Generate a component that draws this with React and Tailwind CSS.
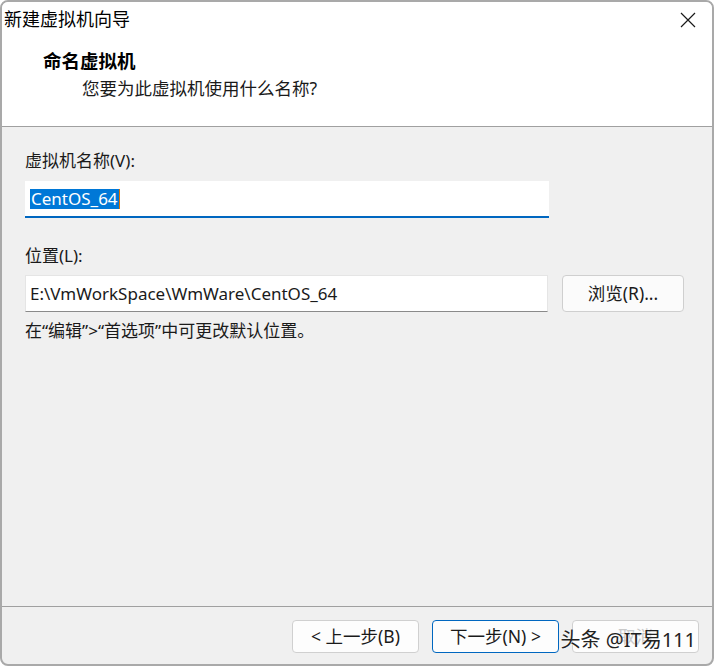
const font = { fontFamily: '"Noto Sans", "Noto Sans CJK SC", sans-serif' };

const WinButton = ({ children, primary }) => (
  <button
    className={
      primary
        ? "flex h-[33px] w-[127px] items-center justify-center rounded-[4px] border border-[#0067c0] bg-[#fdfdfd] text-[17.5px] text-[#1a1a1a]"
        : "flex h-[33px] w-[127px] items-center justify-center rounded-[4px] border border-[#d0d0d0] bg-[#fdfdfd] text-[17.5px] text-[#1a1a1a]"
    }
  >
    {children}
  </button>
);

const App = () => {
  return (
    <div className="h-[666px] w-[714px] bg-white" style={font}>
      <div className="flex h-full w-full flex-col overflow-hidden rounded-[8px] border-2 border-[#a9a9a9] bg-[#f0f0f0]">
        {/* Title bar + header */}
        <div className="h-[124px] bg-white">
          <div className="flex h-[34px] items-center justify-between pl-[2px] pr-[16px]">
            <span className="text-[18px] leading-none text-black">新建虚拟机向导</span>
            <svg width="16" height="16" viewBox="0 0 16 16" className="mt-[2px]">
              <path d="M1 1L15 15M15 1L1 15" stroke="#1a1a1a" strokeWidth="1.2" fill="none" />
            </svg>
          </div>
          <div className="pl-[41px] pt-[13px]">
            <div className="text-[18.5px] font-bold leading-[24px] text-black">命名虚拟机</div>
            <div className="pl-[39px] pt-[4px] text-[17.5px] leading-[22px] text-[#1a1a1a]">
              您要为此虚拟机使用什么名称?
            </div>
          </div>
        </div>
        <div className="h-px bg-[#a0a0a0]" />

        {/* Body */}
        <div className="flex flex-1 flex-col px-[23px] pt-[23px] text-[17px] text-[#1a1a1a]">
          <div className="leading-[22px]">虚拟机名称(V):</div>
          <div className="mt-[9px] flex h-[37px] w-[524px] items-center border-b-2 border-[#0067c0] bg-white pl-[5px]">
            <span className="bg-[#0078d7] px-[1px] leading-[20px] text-white">CentOS_64</span>
            <span className="h-[20px] w-px bg-[#e07000]" />
          </div>
          <div className="mt-[27px] leading-[22px]">位置(L):</div>
          <div className="mt-[8px] flex items-center gap-[14px]">
            <div className="flex h-[37px] w-[523px] items-center border border-b-[#8a8a8a] border-[#e5e5e5] bg-white pl-[4px]">
              E:\VmWorkSpace\WmWare\CentOS_64
            </div>
            <button className="flex h-[37px] w-[122px] items-center justify-center rounded-[4px] border border-[#cfcfcf] bg-[#fbfbfb] text-[17.5px]">
              浏览(R)...
            </button>
          </div>
          <div className="mt-[8px] leading-[22px]">
            在“编辑”&gt;“首选项”中可更改默认位置。
          </div>
        </div>

        {/* Footer */}
        <div className="h-px bg-[#a0a0a0]" />
        <div className="relative flex h-[57px] items-start justify-end gap-[13px] pr-[13px] pt-[13px]">
          <WinButton>&lt; 上一步(B)</WinButton>
          <WinButton primary>下一步(N) &gt;</WinButton>
          <WinButton>
            <span className="text-[#c9c9c9]">取消</span>
          </WinButton>
          <span className="absolute right-[16px] top-[21px] text-[20px] leading-[24px] text-[#222] [text-shadow:0_0_2px_#fff]">
            头条 @IT易111
          </span>
        </div>
      </div>
    </div>
  );
};

export default App;
